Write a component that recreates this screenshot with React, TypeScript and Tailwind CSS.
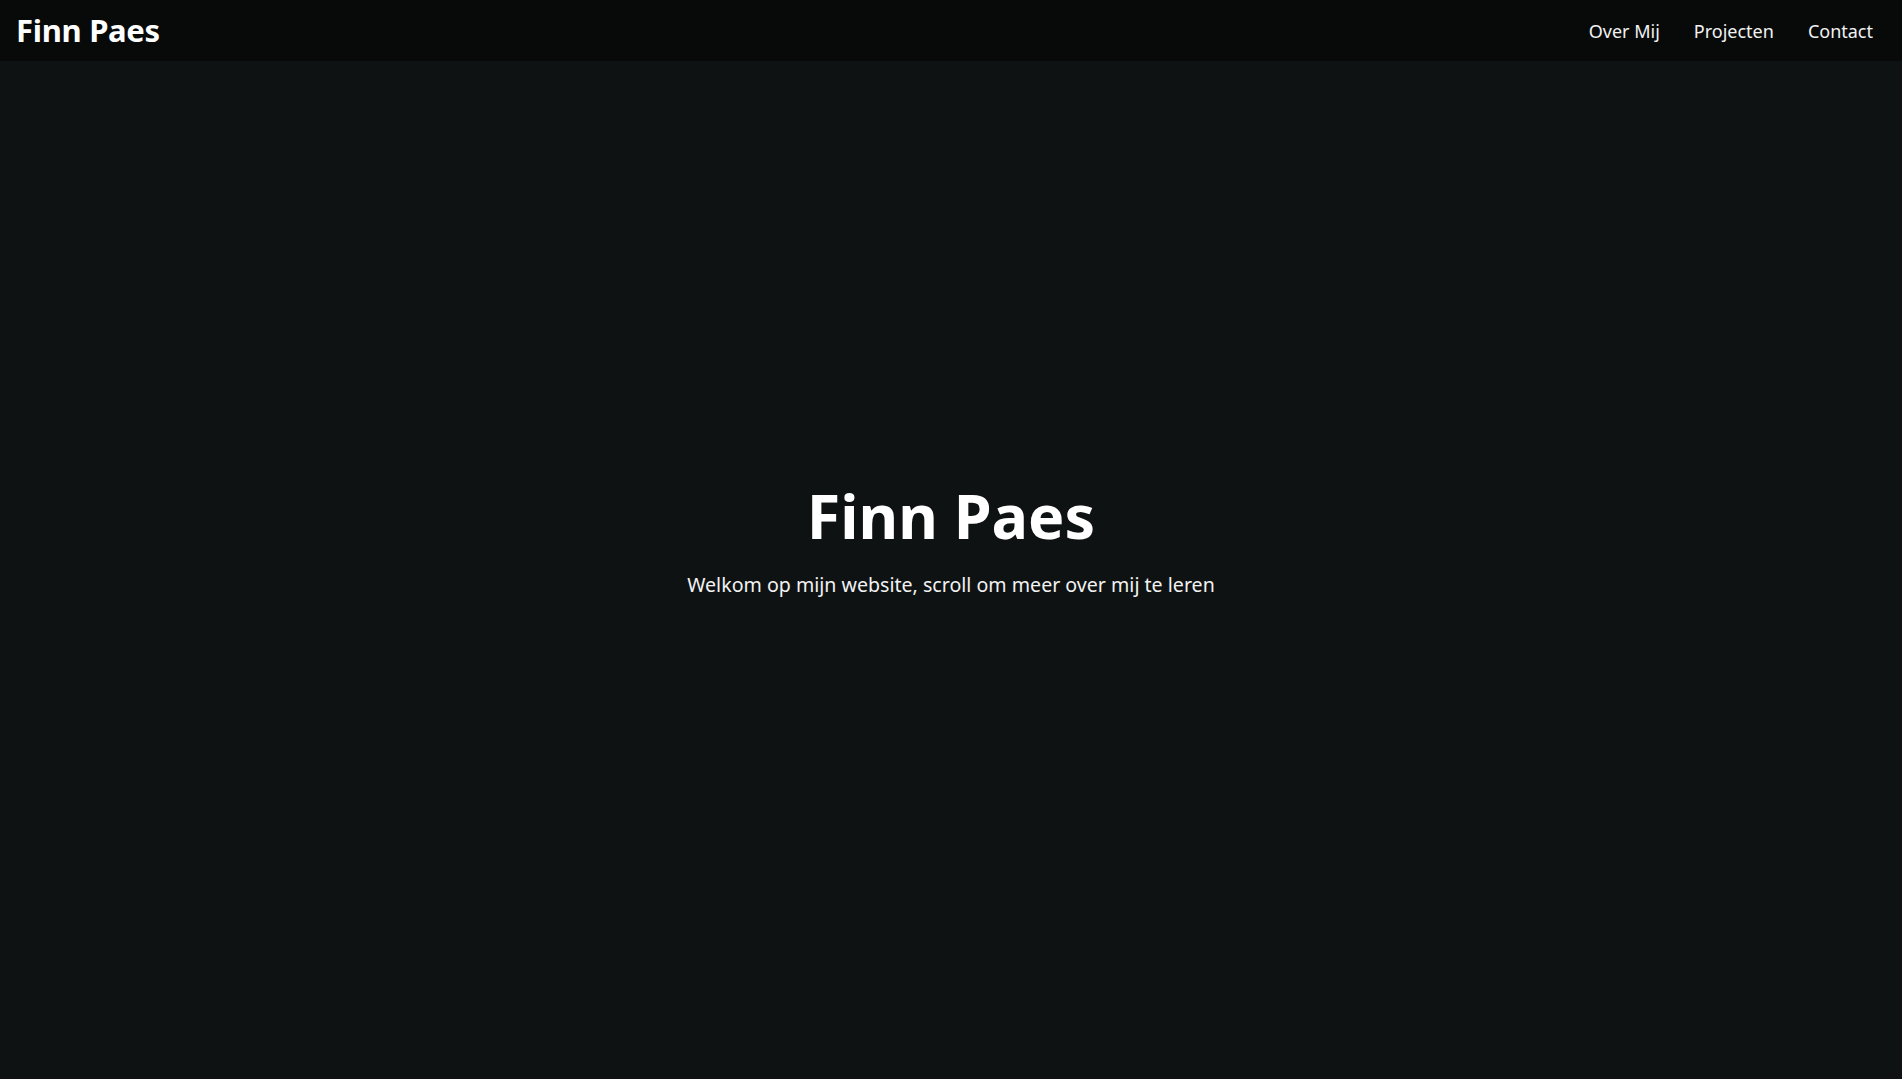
import React from "react";

const links = ["Over Mij", "Projecten", "Contact"];

const Header = () => {
  return (
    <header className="fixed top-0 left-0 right-0 h-[61px] bg-[#080a0a] flex items-center justify-between pl-4 pr-[29px]">
      <a href="#" className="text-[31px] font-bold text-white leading-none tracking-[-0.3px]">
        Finn Paes
      </a>
      <nav className="flex items-center gap-[34px] pt-[1px]">
        {links.map((l) => (
          <a key={l} href="#" className="text-[18px] text-[#f2f2f2] leading-none">
            {l}
          </a>
        ))}
      </nav>
    </header>
  );
};

export default function App() {
  return (
    <div className="min-h-screen bg-[#0e1213] font-['Noto_Sans',sans-serif]">
      <Header />
      <section className="h-screen flex flex-col items-center justify-center text-center">
        <h1 className="text-[61px] font-bold text-white leading-none mt-[6px]">Finn Paes</h1>
        <p className="text-[19.6px] text-[#f2f2f2] mt-[24px]">
          Welkom op mijn website, scroll om meer over mij te leren
        </p>
      </section>
    </div>
  );
}
